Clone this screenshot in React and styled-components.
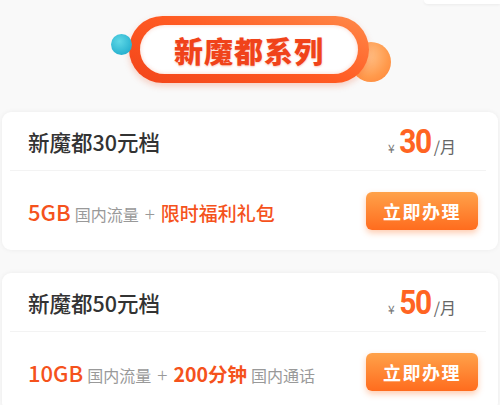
import React from "react";
import styled, { createGlobalStyle } from "styled-components";

const GlobalStyle = createGlobalStyle`
  html, body {
    margin: 0;
    padding: 0;
    background: #f9f9f9;
  }
  body {
    font-family: "Noto Sans CJK SC", "Noto Sans", sans-serif;
  }
`;

const Page = styled.div`
  width: 500px;
  height: 405px;
  overflow: hidden;
  background: #f9f9f9;
  display: flex;
  flex-direction: column;

  & > * {
    flex-shrink: 0;
  }
`;

const TopStrip = styled.div`
  display: flex;
  justify-content: flex-end;
  height: 4px;
`;

const TopEdge = styled.div`
  width: 76px;
  height: 4px;
  background: #fff;
  border-bottom-left-radius: 8px;
  box-shadow: 0 1px 3px rgba(0, 0, 0, 0.06);
`;

const BannerArea = styled.div`
  height: 108px;
  display: flex;
  justify-content: center;
  padding-top: 12px;
  box-sizing: border-box;
`;

const PillWrap = styled.div`
  position: relative;
  width: 240px;
  height: 67px;
  margin-left: -2px;
`;

const Dot = styled.div`
  position: absolute;
  border-radius: 50%;
  left: ${(p) => p.left}px;
  top: ${(p) => p.top}px;
  width: ${(p) => p.size}px;
  height: ${(p) => p.size}px;
  background: ${(p) => p.bg};
  z-index: ${(p) => p.z};
`;

const Pill = styled.div`
  position: relative;
  z-index: 1;
  box-sizing: border-box;
  width: 100%;
  height: 100%;
  border-radius: 34px;
  padding: 9px 11px;
  background: linear-gradient(200deg, #ff8a4a 0%, #ff5a22 50%, #f2441a 100%);
  box-shadow: 0 3px 6px rgba(240, 80, 30, 0.25);
`;

const PillInner = styled.div`
  height: 100%;
  border-radius: 26px;
  background: #fff;
  display: flex;
  align-items: center;
  justify-content: center;
  box-shadow: inset 0 0 4px rgba(240, 80, 30, 0.25);
`;

const BannerTitle = styled.span`
  font-size: 29px;
  font-weight: 900;
  color: #f0431a;
  letter-spacing: 1px;
  text-shadow: 0 1px 2px rgba(240, 70, 20, 0.3);
`;

const CardList = styled.div`
  display: flex;
  flex-direction: column;
  gap: 23px;
  padding: 0 2px;
`;

const Card = styled.div`
  flex-shrink: 0;
  background: #fff;
  border-radius: 9px;
  box-shadow: 0 0 5px rgba(0, 0, 0, 0.06);
  display: flex;
  flex-direction: column;
`;

const CardHeader = styled.div`
  height: 58px;
  display: flex;
  align-items: center;
  justify-content: space-between;
  padding: 0 42px 0 26px;
`;

const PlanName = styled.span`
  font-size: 21.5px;
  color: #333;
  font-weight: 500;
`;

const Price = styled.div`
  display: flex;
  align-items: baseline;
  color: #777;
`;

const Yen = styled.span`
  font-size: 12px;
  margin-right: 3px;
`;

const Amount = styled.span`
  font-family: Roboto, "Liberation Sans", sans-serif;
  font-size: 34px;
  font-weight: 700;
  color: #ff6422;
  letter-spacing: -1.5px;
  margin: 0 1px 0 -1px;
  transform: scaleX(0.88);
  display: inline-block;
`;

const Unit = styled.span`
  font-size: 16px;
  color: #666;
`;

const Divider = styled.div`
  height: 1px;
  margin: 0 12px 0 8px;
  background: #f3f3f3;
`;

const CardBody = styled.div`
  height: 79px;
  display: flex;
  align-items: center;
  justify-content: space-between;
  padding: 0 20px 0 26px;
`;

const Benefits = styled.div`
  display: flex;
  align-items: baseline;
`;

const Highlight = styled.span`
  font-size: ${(p) => p.size}px;
  color: #f5521c;
  font-weight: ${(p) => p.weight || 500};
  margin-right: 4px;
`;

const Muted = styled.span`
  font-size: 16px;
  color: #999;
  margin-right: 6px;
`;

const Plus = styled.span`
  font-size: 19px;
  font-weight: 300;
  color: #999;
  margin-right: 6px;
`;

const ApplyButton = styled.button`
  width: 112px;
  height: 38px;
  border: none;
  border-radius: 6px;
  background: linear-gradient(180deg, #ffa24a 0%, #ff6c1e 100%);
  box-shadow: 0 3px 6px rgba(255, 110, 30, 0.35);
  color: #fff;
  font-family: "Noto Sans CJK SC", sans-serif;
  font-size: 18px;
  font-weight: 700;
  letter-spacing: 1.5px;
  padding: 0;
  cursor: pointer;
`;

const plans = [
  {
    name: "新魔都30元档",
    price: "30",
    benefits: (
      <>
        <Highlight size={22}>5GB</Highlight>
        <Muted>国内流量</Muted>
        <Plus>+</Plus>
        <Highlight size={19}>限时福利礼包</Highlight>
      </>
    ),
  },
  {
    name: "新魔都50元档",
    price: "50",
    benefits: (
      <>
        <Highlight size={22}>10GB</Highlight>
        <Muted>国内流量</Muted>
        <Plus>+</Plus>
        <Highlight size={19.5} weight={700}>200分钟</Highlight>
        <Muted>国内通话</Muted>
      </>
    ),
  },
];

export default function App() {
  return (
    <>
      <GlobalStyle />
      <Page>
        <TopStrip>
          <TopEdge />
        </TopStrip>
        <BannerArea>
          <PillWrap>
            <Dot
              left={-18}
              top={18}
              size={21}
              z={2}
              bg="radial-gradient(circle at 40% 35%, #5fd8e6 0%, #2bb3d0 70%, #1f9fc0 100%)"
            />
            <Dot
              left={222}
              top={26}
              size={40}
              z={0}
              bg="radial-gradient(circle at 40% 35%, #ffc48c 0%, #ff9a4c 60%, #ff8236 100%)"
            />
            <Pill>
              <PillInner>
                <BannerTitle>新魔都系列</BannerTitle>
              </PillInner>
            </Pill>
          </PillWrap>
        </BannerArea>
        <CardList>
          {plans.map((plan) => (
            <Card key={plan.name}>
              <CardHeader>
                <PlanName>{plan.name}</PlanName>
                <Price>
                  <Yen>¥</Yen>
                  <Amount>{plan.price}</Amount>
                  <Unit>/月</Unit>
                </Price>
              </CardHeader>
              <Divider />
              <CardBody>
                <Benefits>{plan.benefits}</Benefits>
                <ApplyButton>立即办理</ApplyButton>
              </CardBody>
            </Card>
          ))}
        </CardList>
      </Page>
    </>
  );
}
